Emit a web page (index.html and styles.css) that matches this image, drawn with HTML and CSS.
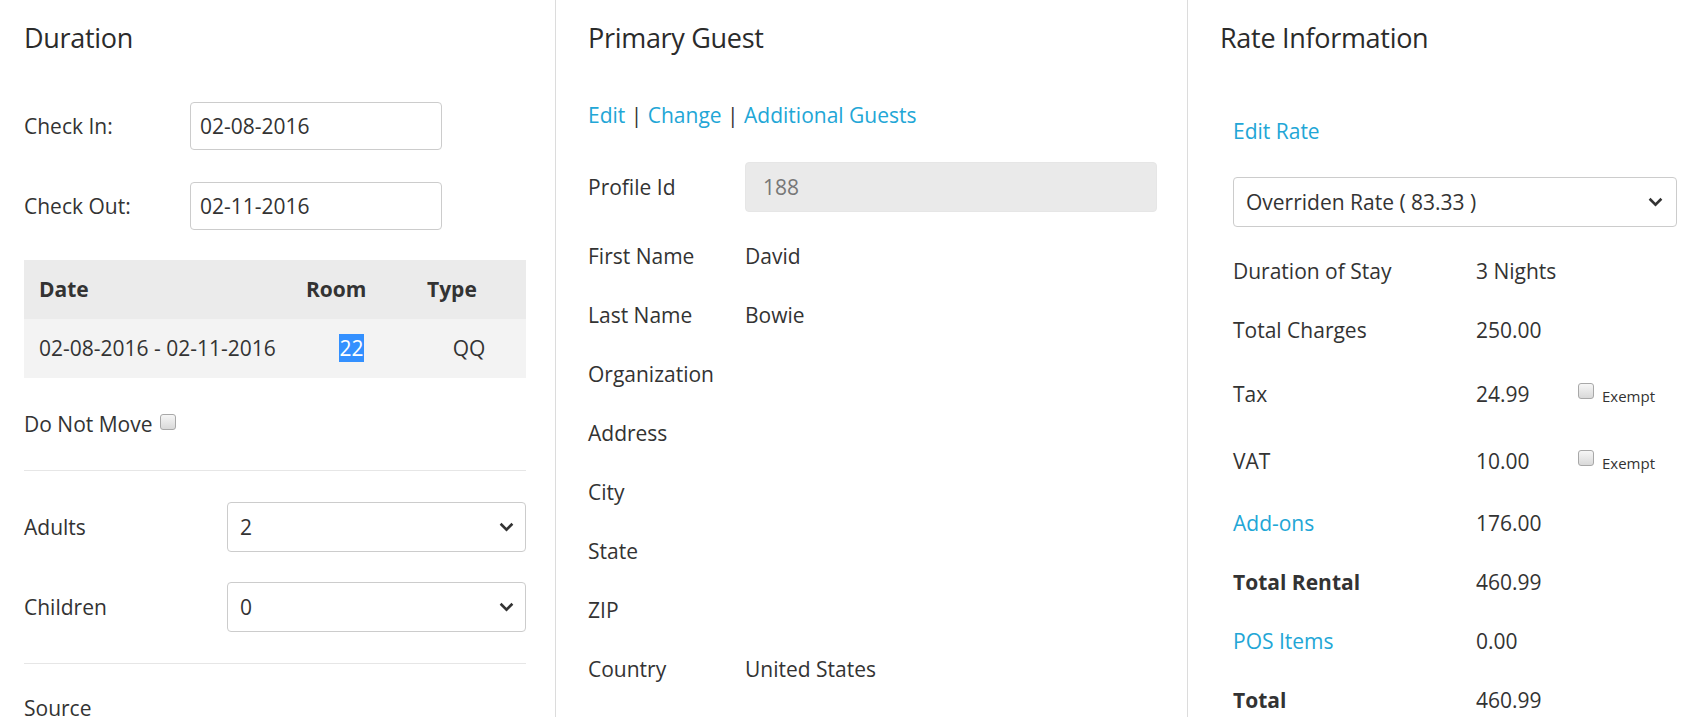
FILE: index.html
```html
<!DOCTYPE html>
<html lang="en">
<head>
<meta charset="utf-8">
<title>Reservation</title>
<link rel="stylesheet" href="styles.css">
</head>
<body>
<div class="page">
  <section class="col col-duration">
    <h2 class="col-title">Duration</h2>
    <div class="date-row first">
      <label class="date-label">Check In:</label>
      <input class="text-input date-input" type="text" value="02-08-2016">
    </div>
    <div class="date-row second">
      <label class="date-label">Check Out:</label>
      <input class="text-input date-input" type="text" value="02-11-2016">
    </div>
    <table class="room-table">
      <thead>
        <tr><th class="c-date">Date</th><th class="c-room">Room</th><th class="c-type">Type</th></tr>
      </thead>
      <tbody>
        <tr><td>02-08-2016 - 02-11-2016</td><td class="center"><span class="selected">22</span></td><td class="center">QQ</td></tr>
      </tbody>
    </table>
    <div class="dnm">Do Not Move<input type="checkbox" class="check dnm-check"></div>
    <hr class="sep">
    <div class="count-row first">
      <span class="count-label">Adults</span>
      <div class="select count-select">
        <span>2</span>
        <svg class="chev" width="15" height="10" viewBox="0 0 15 10"><path d="M1.6 1.8 L7.5 7.6 L13.4 1.8" fill="none" stroke="#333" stroke-width="2.6"/></svg>
      </div>
    </div>
    <div class="count-row second">
      <span class="count-label">Children</span>
      <div class="select count-select">
        <span>0</span>
        <svg class="chev" width="15" height="10" viewBox="0 0 15 10"><path d="M1.6 1.8 L7.5 7.6 L13.4 1.8" fill="none" stroke="#333" stroke-width="2.6"/></svg>
      </div>
    </div>
    <hr class="sep">
    <div class="source">Source</div>
  </section>

  <section class="col col-guest">
    <h2 class="col-title">Primary Guest</h2>
    <div class="links"><a class="link" href="#">Edit</a> | <a class="link" href="#">Change</a> | <a class="link" href="#">Additional Guests</a></div>
    <div class="profile-row">
      <span class="g-label">Profile Id</span>
      <input class="text-input readonly-input" type="text" value="188" readonly>
    </div>
    <div class="info-list">
      <div class="info-row"><span class="g-label">First Name</span><span>David</span></div>
      <div class="info-row"><span class="g-label">Last Name</span><span>Bowie</span></div>
      <div class="info-row"><span class="g-label">Organization</span><span></span></div>
      <div class="info-row"><span class="g-label">Address</span><span></span></div>
      <div class="info-row"><span class="g-label">City</span><span></span></div>
      <div class="info-row"><span class="g-label">State</span><span></span></div>
      <div class="info-row"><span class="g-label">ZIP</span><span></span></div>
      <div class="info-row"><span class="g-label">Country</span><span>United States</span></div>
    </div>
  </section>

  <section class="col col-rate">
    <h2 class="col-title">Rate Information</h2>
    <div class="rate-body">
      <div class="edit-rate"><a class="link" href="#">Edit Rate</a></div>
      <div class="select rate-select">
        <span>Overriden Rate ( 83.33 )</span>
        <svg class="chev" width="15" height="10" viewBox="0 0 15 10"><path d="M1.6 1.8 L7.5 7.6 L13.4 1.8" fill="none" stroke="#333" stroke-width="2.6"/></svg>
      </div>
      <div class="rate-rows">
        <div class="rate-row"><span class="r-label">Duration of Stay</span><span class="r-value">3 Nights</span></div>
        <div class="rate-row"><span class="r-label">Total Charges</span><span class="r-value">250.00</span></div>
        <div class="rate-row tall"><span class="r-label">Tax</span><span class="r-value">24.99</span><span class="exempt"><input type="checkbox" class="check ex-check"><span class="ex-text">Exempt</span></span></div>
        <div class="rate-row tall"><span class="r-label">VAT</span><span class="r-value">10.00</span><span class="exempt"><input type="checkbox" class="check ex-check"><span class="ex-text">Exempt</span></span></div>
        <div class="rate-row"><span class="r-label"><a class="link" href="#">Add-ons</a></span><span class="r-value">176.00</span></div>
        <div class="rate-row"><span class="r-label bold">Total Rental</span><span class="r-value">460.99</span></div>
        <div class="rate-row"><span class="r-label"><a class="link" href="#">POS Items</a></span><span class="r-value">0.00</span></div>
        <div class="rate-row"><span class="r-label bold">Total</span><span class="r-value">460.99</span></div>
      </div>
    </div>
  </section>
</div>
</body>
</html>
```

FILE: styles.css
```css
* { box-sizing: border-box; }
html, body { margin: 0; padding: 0; }
body {
  font-family: "Open Sans", "Noto Sans", sans-serif;
  font-size: 21px;
  line-height: 29px;
  color: #333;
  background: #fff;
}
.page {
  display: flex;
  height: 717px;
  overflow: hidden;
}
.col { padding-top: 19px; }
.col-duration { width: 555px; flex: none; padding-left: 24px; padding-right: 29px; }
.col-guest { width: 632px; flex: none; border-left: 1px solid #dcdcdc; padding-left: 32px; padding-right: 30px; }
.col-rate { flex: 1; border-left: 1px solid #dcdcdc; padding-left: 32px; padding-right: 29px; }

.col-title {
  margin: 0;
  font-size: 27px;
  font-weight: 400;
  letter-spacing: -0.3px;
  line-height: 38px;
  color: #2b2b2b;
}

.link { color: #22a6d6; text-decoration: none; }
.bold { font-weight: 700; }

.text-input {
  font: inherit;
  color: #333;
  border: 1px solid #ccc;
  border-radius: 4px;
  background: #fff;
  padding: 0 9px;
  margin: 0;
  outline: none;
}

/* Duration column */
.date-row { display: flex; align-items: center; height: 48px; }
.date-row.first { margin-top: 45px; }
.date-row.second { margin-top: 32px; }
.date-label { width: 166px; flex: none; }
.date-input { width: 252px; height: 48px; }

.room-table {
  margin-top: 30px;
  width: 502px;
  border-collapse: collapse;
  table-layout: fixed;
}
.room-table th, .room-table td {
  height: 59px;
  padding: 0 15px;
  vertical-align: middle;
  white-space: nowrap;
}
.room-table th { background: #ebebeb; font-weight: 700; text-align: left; }
.room-table td { background: #f3f3f3; }
.room-table .center { text-align: center; }
.c-date { width: 267px; }
.c-room { width: 121px; }
.c-type { width: 114px; }
.selected { background: #3390ff; color: #fff; }

.dnm { margin-top: 32px; }
.check {
  -webkit-appearance: none;
  appearance: none;
  width: 16px;
  height: 16px;
  border: 1px solid #a8a8a8;
  border-radius: 3px;
  background: linear-gradient(#f6f6f6, #d9d9d9);
  vertical-align: baseline;
  padding: 0;
}
.dnm-check { margin: 0 0 2px 7px; }

.sep { border: 0; border-top: 1px solid #e6e6e6; height: 0; margin: 31px 0 0; }

.count-row { display: flex; align-items: center; height: 50px; }
.count-row.first { margin-top: 31px; }
.count-row.second { margin-top: 30px; }
.count-label { width: 203px; flex: none; }
.select {
  display: flex;
  align-items: center;
  justify-content: space-between;
  height: 50px;
  border: 1px solid #ccc;
  border-radius: 4px;
  background: #fff;
  padding: 0 11px 0 12px;
}
.count-select { width: 299px; }
.chev { display: block; }
.source { margin-top: 30px; }

/* Guest column */
.links { margin-top: 44px; }
.profile-row { display: flex; align-items: center; height: 50px; margin-top: 32px; }
.g-label { width: 157px; flex: none; }
.readonly-input {
  flex: 1;
  height: 50px;
  background: #eaeaea;
  border-color: #e6e6e6;
  color: #777;
  padding-left: 17px;
}
.info-list { margin-top: 15px; }
.info-row { display: flex; padding: 15px 0; }

/* Rate column */
.rate-body { padding-left: 13px; }
.edit-rate { margin-top: 60px; }
.rate-select { margin-top: 31px; padding-right: 13px; }
.rate-rows { margin-top: 15px; }
.rate-row { display: flex; align-items: baseline; padding: 15px 0; }
.rate-row.tall { padding: 20px 0 18px; }
.r-label { width: 243px; flex: none; }
.r-value { width: 102px; flex: none; }
.exempt { font-size: 15px; line-height: 24px; }
.ex-check { margin: 0 8px 3px 0; }
```
